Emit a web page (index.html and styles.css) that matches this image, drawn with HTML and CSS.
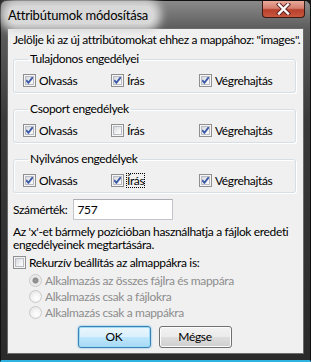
FILE: index.html
```html
<html>

<head>
  <title>Attribútumok módosítása</title>
  <link rel="stylesheet" href="styles.css">
</head>

<body>
  <div class="window">
    <div class="titlebar">
      <span class="title">Attribútumok módosítása</span>
      <div class="close">
        <svg width="15" height="12" viewBox="0 0 15 12">
          <path d="M3 1.5 L12 10.5 M12 1.5 L3 10.5" stroke="#5a2020" stroke-width="4.2" stroke-linecap="square" />
          <path d="M3 1.5 L12 10.5 M12 1.5 L3 10.5" stroke="#ffffff" stroke-width="2.4" stroke-linecap="square" />
        </svg>
      </div>
    </div>
    <div class="client">
      <p class="intro">Jelölje ki az új attribútomokat ehhez a mappához: "images".</p>

      <fieldset class="group">
        <legend>Tulajdonos engedélyei</legend>
        <div class="perms">
          <label class="check"><span class="box on"></span>Olvasás</label>
          <label class="check"><span class="box on"></span>Írás</label>
          <label class="check"><span class="box on"></span>Végrehajtás</label>
        </div>
      </fieldset>

      <fieldset class="group">
        <legend>Csoport engedélyek</legend>
        <div class="perms">
          <label class="check"><span class="box on"></span>Olvasás</label>
          <label class="check"><span class="box"></span>Írás</label>
          <label class="check"><span class="box on"></span>Végrehajtás</label>
        </div>
      </fieldset>

      <fieldset class="group">
        <legend>Nyilvános engedélyek</legend>
        <div class="perms">
          <label class="check"><span class="box on"></span>Olvasás</label>
          <label class="check"><span class="box on"></span><span class="focus">Írás</span></label>
          <label class="check"><span class="box on"></span>Végrehajtás</label>
        </div>
      </fieldset>

      <div class="valuerow">
        <span class="label">Számérték:</span>
        <span class="inputbox">757</span>
      </div>

      <p class="hint">Az 'x'-et bármely pozícióban használhatja a fájlok eredeti engedélyeinek megtartására.</p>

      <label class="check recursive"><span class="box"></span>Rekurzív beállítás az almappákra is:</label>

      <div class="radios">
        <label class="radio"><span class="dot on"></span>Alkalmazás az összes fájlra és mappára</label>
        <label class="radio"><span class="dot"></span>Alkalmazás csak a fájlokra</label>
        <label class="radio"><span class="dot"></span>Alkalmazás csak a mappákra</label>
      </div>

      <div class="buttons">
        <div class="button default">OK</div>
        <div class="button">Mégse</div>
      </div>
    </div>
  </div>
</body>

</html>
```

FILE: styles.css
```css
body {
  margin: 0;
  background: #1a1a1a;
}

.window {
  width: 311px;
  height: 362px;
  box-sizing: border-box;
  background: linear-gradient(to bottom, #8a8a8a 0px, #5c5c5c 28px, #3a3a3a 120px, #2a2a2a 100%);
  border: 1px solid #101010;
  border-bottom: 2px solid #2fb3e0;
  border-radius: 6px 6px 0 0;
  font-family: Lato, "Noto Sans", sans-serif;
  font-size: 12px;
  letter-spacing: -0.35px;
  color: #000;
}

.titlebar {
  height: 27px;
  display: flex;
  align-items: flex-start;
  padding-left: 7px;
  padding-right: 5px;
}

.title {
  margin-top: 5px;
  font-size: 13px;
  letter-spacing: -0.2px;
  line-height: 18px;
  padding: 0 6px 0 0;
  background: #d8d8d8;
  border-radius: 8px;
  box-shadow: 0 0 9px 7px #d8d8d8;
}

.close {
  margin-left: auto;
  width: 43px;
  height: 17px;
  box-sizing: border-box;
  border: 1px solid #3b1a16;
  border-top: none;
  border-radius: 0 0 4px 4px;
  background: linear-gradient(to bottom, #e9a99b 0%, #d47f6e 45%, #b8402c 55%, #c9573f 100%);
  display: flex;
  align-items: center;
  justify-content: center;
}

.client {
  margin: 0 6px;
  height: 326px;
  box-sizing: border-box;
  background: #f0f0f0;
  border: 1px solid #6a6a6a;
  padding: 3px 7px 0 5px;
}

.intro {
  margin: 0;
  line-height: 16px;
  white-space: nowrap;
}

.group {
  margin: 4px 0 0 0;
  padding: 0 0 4px 9px;
  border: 1px solid #d5dfe5;
  border-radius: 3px;
  box-shadow: inset 1px 1px 0 #fff, 1px 1px 0 #fff;
}

.group + .group {
  margin-top: 9px;
}

.group legend {
  padding: 0 2px;
  margin-left: 5px;
  line-height: 14px;
}

.perms {
  display: grid;
  grid-template-columns: 88px 88px auto;
  padding-top: 6px;
}

.check,
.radio {
  display: flex;
  align-items: center;
  gap: 3px;
  height: 16px;
  white-space: nowrap;
}

.box {
  width: 13px;
  height: 13px;
  box-sizing: border-box;
  border: 1px solid #8f8f8f;
  background: linear-gradient(135deg, #c9ccd2 0%, #f4f4f4 60%, #ffffff 100%);
  box-shadow: inset 0 0 0 1px #f6f6f6, inset 0 0 0 2px #b9bcc2;
  flex: none;
}

.box.on {
  background: url("data:image/svg+xml;utf8,<svg xmlns='http://www.w3.org/2000/svg' width='11' height='11'><path d='M2.2 5.2 L4.4 7.8 L8.8 2.2' fill='none' stroke='%233d5aa8' stroke-width='1.9'/></svg>") no-repeat center, linear-gradient(135deg, #c9ccd2 0%, #f4f4f4 60%, #ffffff 100%);
}

.focus {
  outline: 1px dotted #000;
  line-height: 13px;
}

.valuerow {
  display: flex;
  align-items: center;
  gap: 6px;
  margin-top: 6px;
}

.inputbox {
  width: 100px;
  height: 21px;
  box-sizing: border-box;
  background: #fff;
  border: 1px solid #c2c6cc;
  border-top-color: #abadb3;
  padding-left: 3px;
  line-height: 19px;
}

.hint {
  margin: 5px 0 0 0;
  line-height: 13px;
}

.recursive {
  margin-top: 3px;
}

.radios {
  margin-top: 2px;
  padding-left: 16px;
  color: #8d8d8d;
}

.dot {
  width: 13px;
  height: 13px;
  box-sizing: border-box;
  border-radius: 50%;
  border: 1px solid #c9c9c9;
  background: radial-gradient(circle at 60% 65%, #ffffff 0%, #f2f2f2 50%, #dcdcdc 100%);
  flex: none;
}

.dot.on {
  background: radial-gradient(circle, #9a9a9a 0, #8a8a8a 2.5px, #e8e8e8 3.5px, #f4f4f4 100%);
}

.buttons {
  display: flex;
  justify-content: center;
  gap: 8px;
  margin-top: 6px;
}

.button {
  width: 73px;
  height: 22px;
  box-sizing: border-box;
  border: 1px solid #707070;
  border-radius: 3px;
  background: linear-gradient(to bottom, #f2f2f2 0%, #ebebeb 50%, #dddddd 51%, #cfcfcf 100%);
  box-shadow: inset 0 0 0 1px #fcfcfc;
  text-align: center;
  line-height: 20px;
}

.button.default {
  border-color: #3c7fb1;
  background: linear-gradient(to bottom, #eaf6fd 0%, #d9f0fc 50%, #bee6fd 51%, #a7d9f5 100%);
  box-shadow: inset 0 0 0 1px #9ddcf8, 0 0 2px #48b1e6;
}
```
